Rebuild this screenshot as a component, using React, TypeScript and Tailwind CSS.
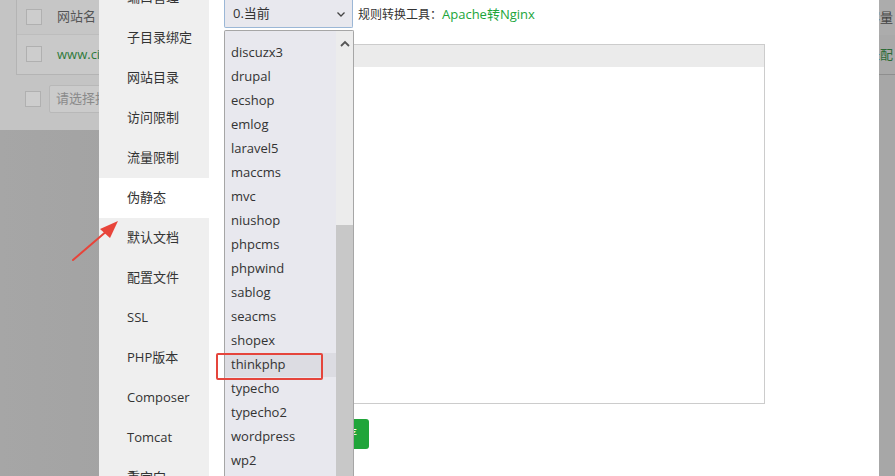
import React from 'react';

const sideItems = [
  '端口管理',
  '子目录绑定',
  '网站目录',
  '访问限制',
  '流量限制',
  '伪静态',
  '默认文档',
  '配置文件',
  'SSL',
  'PHP版本',
  'Composer',
  'Tomcat',
  '重定向',
];

const rules = [
  'discuzx3',
  'drupal',
  'ecshop',
  'emlog',
  'laravel5',
  'maccms',
  'mvc',
  'niushop',
  'phpcms',
  'phpwind',
  'sablog',
  'seacms',
  'shopex',
  'thinkphp',
  'typecho',
  'typecho2',
  'wordpress',
  'wp2',
];

const font = "font-['Open_Sans','Noto_Sans_CJK_SC',sans-serif]";

function BackgroundPage() {
  return (
    <div className="flex h-full w-full flex-col">
      {/* dimmed site list card */}
      <div className="h-[130px] bg-[#c4c4c4] pl-[16px] pr-0">
        <div className="flex h-[75px] flex-col border-b border-l border-[#b4b4b4] bg-[#c9c9c9]">
          <div className="flex h-[35px] items-center border-b border-[#bdbdbd] bg-[#c6c6c6]">
            <span className="ml-[9px] h-[16px] w-[16px] border border-[#b0b0b0] bg-[#cdcdcd]" />
            <span className="ml-[15px] text-[13px] text-[#555]">网站名</span>
          </div>
          <div className="flex h-[40px] items-center">
            <span className="ml-[9px] h-[16px] w-[16px] border border-[#b0b0b0] bg-[#cdcdcd]" />
            <span className="ml-[15px] text-[13px] text-[#2f7a3c]">www.ciiii.com</span>
          </div>
        </div>
        <div className="mt-[10px] flex items-center">
          <span className="ml-[9px] h-[16px] w-[16px] border border-[#b0b0b0] bg-[#cdcdcd]" />
          <div className="ml-[8px] flex h-[28px] w-[120px] items-center rounded-[2px] border border-[#b8b8b8] bg-[#cbcbcb] pl-[6px] text-[13px] text-[#8a8a8a]">
            请选择批量操作
          </div>
        </div>
      </div>
      <div className="flex-1 bg-gradient-to-r from-[#a6a6a6] to-[#8f8f8f]" />
    </div>
  );
}

function RightEdge() {
  return (
    <div className="flex h-full w-[16px] flex-col bg-[#a7a7a7]">
      <div className="flex h-[35px] items-center overflow-hidden whitespace-nowrap bg-[#acacac] text-[13px] text-[#444]">
        <span className="-ml-[12px]">容量</span>
      </div>
      <div className="flex h-[40px] items-center overflow-hidden whitespace-nowrap border-b border-[#8e8e8e] bg-[#a9a9a9] text-[13px] text-[#2d6b37]">
        <span className="-ml-[12px]">未配</span>
      </div>
    </div>
  );
}

export default function App() {
  return (
    <div className={`relative h-[476px] w-[895px] overflow-hidden ${font}`}>
      <div className="flex h-full w-full">
        <div className="flex-1">
          <BackgroundPage />
        </div>
        <RightEdge />
      </div>

      {/* site settings modal */}
      <div className="absolute left-[99px] top-0 flex h-full w-[780px] bg-white">
        <div className="w-[110px] shrink-0 bg-[#efefef]">
          <div className="-mt-[22px]">
            {sideItems.map((item) => (
              <div
                key={item}
                className={`flex h-[40px] items-center pl-[28px] text-[13px] text-[#333] ${
                  item === '伪静态' ? 'bg-white' : ''
                }`}
              >
                {item}
              </div>
            ))}
          </div>
        </div>

        <div className="flex-1 pl-[15px]">
          <div className="flex items-center">
            <div className="flex h-[28px] w-[129px] items-center justify-between rounded-b-[2px] border border-t-0 border-[#9bb7d6] bg-[#e8e8ee] pl-[8px] pr-[6px] text-[13px] text-[#333]">
              <span>0.当前</span>
              <svg width="10" height="10" viewBox="0 0 10 10">
                <path d="M1.5 3.5 L5 7 L8.5 3.5" fill="none" stroke="#444" strokeWidth="1.3" />
              </svg>
            </div>
            <span className="ml-[5px] mt-[1px] text-[12px] text-[#333]">
              规则转换工具：<span className="text-[13px] text-[#20a53a]">Apache转Nginx</span>
            </span>
          </div>

          <div className="mt-[16px] flex h-[360px] w-[541px] flex-col border border-[#ccc]">
            <div className="h-[22px] bg-[#ebebeb]" />
            <div className="flex-1 bg-white" />
          </div>

          <div className="mt-[15px] flex pl-[97px]">
            <button className="h-[30px] rounded-[3px] bg-[#20a53a] px-[12px] text-[12px] text-white">
              保存
            </button>
          </div>
        </div>
      </div>

      {/* open select list */}
      <div className="absolute left-[224px] top-[30px] flex h-[460px] w-[130px] rounded-t-[2px] border-l border-r border-t border-[#a6a6a6] bg-[#e8e8ee]">
        <div className="flex-1 pt-[10px]">
          {rules.map((r) => (
            <div
              key={r}
              className={`flex h-[24px] items-center pl-[6px] text-[13px] text-[#333] ${
                r === 'thinkphp' ? 'bg-[#dcdce2]' : ''
              }`}
            >
              {r}
            </div>
          ))}
        </div>
        <div className="flex w-[17px] flex-col bg-[#ececec]">
          <div className="flex h-[24px] items-center justify-center pt-[2px]">
            <svg width="10" height="8" viewBox="0 0 10 8">
              <path d="M1 6 L5 2 L9 6" fill="none" stroke="#555" strokeWidth="1.8" />
            </svg>
          </div>
          <div className="h-[170px]" />
          <div className="flex-1 bg-[#c8c8c8]" />
        </div>
      </div>

      {/* annotation: red box around thinkphp */}
      <div className="absolute left-[216px] top-[353px] h-[27px] w-[107px] rounded-[2px] border-2 border-[#e5453c]" />

      {/* annotation arrow */}
      <svg className="absolute left-0 top-0" width="895" height="476" viewBox="0 0 895 476">
        <line x1="73" y1="260" x2="108" y2="230" stroke="#e8443a" strokeWidth="2" strokeLinecap="round" />
        <path d="M118 221 L100 229 L110 238 Z" fill="#e8443a" />
      </svg>
    </div>
  );
}
